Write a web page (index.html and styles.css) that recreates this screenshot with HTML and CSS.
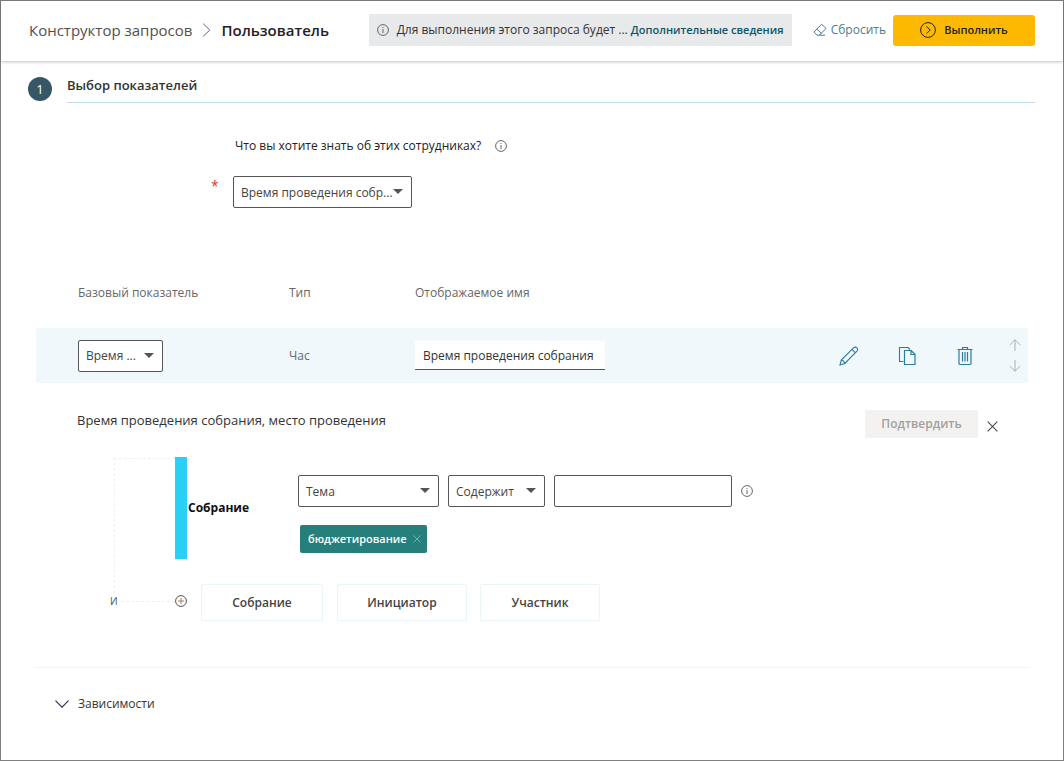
FILE: index.html
```html
<!DOCTYPE html>
<html lang="ru">
<head>
<meta charset="utf-8">
<title>Конструктор запросов</title>
<link rel="stylesheet" href="styles.css">
</head>
<body>
<div class="page">
  <svg class="defs" aria-hidden="true">
    <symbol id="info" viewBox="0 0 12 12"><circle cx="6" cy="6" r="5.4" fill="none" stroke="currentColor" stroke-width="1"/><path d="M6 5v4M6 3v1" stroke="currentColor" stroke-width="1"/></symbol>
    <symbol id="cross" viewBox="0 0 12 12"><path d="M.7.7l10.6 10.6M11.3.7L.7 11.3" stroke="currentColor" stroke-width="1.1" fill="none"/></symbol>
  </svg>

  <header class="header">
    <nav class="crumbs">
      <a class="crumb" href="#">Конструктор запросов</a>
      <svg class="crumb-arrow" viewBox="0 0 8 14"><path d="M.7.7L7.3 7 .7 13.3" fill="none" stroke="currentColor" stroke-width="1"/></svg>
      <h1 class="crumb-current">Пользователь</h1>
    </nav>
    <div class="notice">
      <svg class="icon-info"><use href="#info"/></svg>
      <p class="notice-text">Для выполнения этого запроса будет ... <a class="notice-link" href="#">Дополнительные сведения</a></p>
    </div>
    <button class="reset" type="button">
      <svg class="icon-eraser" viewBox="0 0 14 14"><path d="M8.6 1.2l4.4 4.2-6.6 6.8H4L.9 9.1zM3.9 6.1l4.5 4.3M6 12.2h6" fill="none" stroke="currentColor" stroke-width="1"/></svg>
      Сбросить
    </button>
    <button class="run" type="button">
      <svg class="icon-run" viewBox="0 0 16 16"><circle cx="8" cy="8" r="7.4" fill="none" stroke="currentColor"/><path d="M6.6 4.4L10.2 8l-3.6 3.6" fill="none" stroke="currentColor"/></svg>
      Выполнить
    </button>
  </header>

  <main class="main">
    <div class="step">
      <span class="step-number">1</span>
      <h2 class="step-title">Выбор показателей</h2>
    </div>

    <div class="question">
      <div class="question-head">
        <label for="metric">Что вы хотите знать об этих сотрудниках?</label>
        <svg class="icon-info"><use href="#info"/></svg>
      </div>
      <div class="question-field">
        <span class="required">*</span>
        <span class="select select-metric"><select id="metric"><option>Время проведения собр...</option></select></span>
      </div>
    </div>

    <table class="metrics">
      <colgroup><col class="col-base"><col class="col-type"><col class="col-name"><col></colgroup>
      <thead>
        <tr><th>Базовый показатель</th><th>Тип</th><th>Отображаемое имя</th><th></th></tr>
      </thead>
      <tbody>
        <tr>
          <td><span class="select select-base"><select aria-label="Базовый показатель"><option>Время ...</option></select></span></td>
          <td>Час</td>
          <td><input class="name-input" type="text" aria-label="Отображаемое имя" value="Время проведения собрания"></td>
          <td>
            <div class="actions">
              <button class="action" type="button" aria-label="Изменить"><svg viewBox="0 0 20 20"><path d="M1 19l1.3-5L14.500 1.900c1.200-1.200 2.600-.8 3.400 0s1 2.200 0 3.300L5.800 17.500zM2.300 14c1.700.3 3 1.700 3.500 3.500M13 3.400l3.400 3.400" fill="none" stroke="currentColor" stroke-width="1.100"/></svg></button>
              <button class="action" type="button" aria-label="Копировать"><svg viewBox="0 0 20 20"><path d="M6.500 15.500h-4v-14H11l2 2" fill="none" stroke="currentColor" stroke-width="1.100"/><path d="M7.500 4.500h6.700l3.800 3.800v10.200H7.500zM14 4.500v4h4" fill="none" stroke="currentColor" stroke-width="1.200"/></svg></button>
              <button class="action" type="button" aria-label="Удалить"><svg viewBox="0 0 20 20"><path d="M2.500 3.500h15M7.500 3.500v-2h5v2M4 3.500v13.700c0 .8.5 1.300 1.300 1.300h9.400c.8 0 1.300-.5 1.300-1.300V3.500M7.500 6v9.500M10 6v9.500M12.500 6v9.500" fill="none" stroke="currentColor" stroke-width="1.200"/></svg></button>
              <div class="order">
                <button class="order-button" type="button" aria-label="Выше"><svg viewBox="0 0 12 12"><path d="M6 12V.8M.7 6L6 .8 11.300 6" fill="none" stroke="currentColor"/></svg></button>
                <button class="order-button" type="button" aria-label="Ниже"><svg viewBox="0 0 12 12"><path d="M6 0v11.200M.7 6L6 11.200 11.300 6" fill="none" stroke="currentColor"/></svg></button>
              </div>
            </div>
          </td>
        </tr>
      </tbody>
    </table>

    <section class="editor">
      <div class="editor-head">
        <h3 class="editor-title">Время проведения собрания, место проведения</h3>
        <button class="confirm" type="button" disabled>Подтвердить</button>
        <button class="close" type="button" aria-label="Закрыть"><svg><use href="#cross"/></svg></button>
      </div>

      <div class="tree">
        <div class="rail"></div>
        <div class="rule">
          <strong class="rule-label">Собрание</strong>
          <div class="rule-body">
            <div class="rule-fields">
              <span class="select select-field"><select aria-label="Поле"><option>Тема</option></select></span>
              <span class="select select-operator"><select aria-label="Условие"><option>Содержит</option></select></span>
              <input class="value-input" type="text" aria-label="Значение">
              <svg class="icon-info"><use href="#info"/></svg>
            </div>
            <span class="tag">бюджетирование <button class="tag-remove" type="button" aria-label="Убрать"><svg><use href="#cross"/></svg></button></span>
          </div>
        </div>
        <div class="join"><span>И</span></div>
        <div class="add">
          <svg class="icon-plus" viewBox="0 0 12 12"><circle cx="6" cy="6" r="5.400" fill="none" stroke="currentColor"/><path class="plus-mark" d="M6 3v6M3 6h6"/></svg>
          <button class="add-button add-meeting" type="button">Собрание</button>
          <button class="add-button add-organizer" type="button">Инициатор</button>
          <button class="add-button" type="button">Участник</button>
        </div>
      </div>
    </section>

    <button class="dependencies" type="button">
      <svg viewBox="0 0 14 8"><path d="M.5.700L7 7.200 13.500.700" fill="none" stroke="currentColor" stroke-width="1.200"/></svg>
      Зависимости
    </button>
  </main>
</div>
</body>
</html>
```
FILE: styles.css
```css
* { box-sizing: border-box; }

body {
  margin: 0;
  font: 12px/16px "Open Sans", "Noto Sans", sans-serif;
  color: #333;
  background: #fff;
}

h1, h2, h3, p { margin: 0; }
a { text-decoration: none; }
button, input, select { font: inherit; color: inherit; }
button { padding: 0; border: 0; background: none; cursor: pointer; }
svg { display: block; flex: none; }

.defs { position: absolute; width: 0; height: 0; }

.page {
  min-height: 100vh;
  border: 1px solid #808080;
}

.header {
  display: flex;
  align-items: center;
  height: 60px;
  padding: 0 28px 2px;
  box-shadow: 0 1px 3px rgba(0, 0, 0, 0.25);
}

.crumbs { display: flex; align-items: center; gap: 10px; margin-right: auto; }
.crumb, .crumb-current { font-size: 15px; line-height: 20px; white-space: nowrap; }
.crumb { color: #505050; }
.crumb-current { color: #222; font-weight: 600; }
.crumb-arrow { width: 9px; height: 14px; color: #666; }

.notice {
  display: flex;
  align-items: center;
  gap: 8px;
  width: 423px;
  height: 32px;
  padding: 0 8px;
  background: #e8e9eb;
}
.notice-text { white-space: nowrap; }
.notice-link { color: #0b556a; font-size: 11px; font-weight: 600; }
.icon-info { width: 12px; height: 12px; color: #666; }

.reset {
  display: flex;
  align-items: center;
  gap: 4px;
  margin: 0 7px 0 21px;
  color: #4f7c90;
  font-weight: 500;
}
.icon-eraser { width: 14px; height: 14px; }

.run {
  display: flex;
  align-items: center;
  justify-content: center;
  gap: 8px;
  width: 142px;
  height: 31px;
  border-radius: 3px;
  background: #fdb900;
  color: #222;
  font-size: 11px;
  font-weight: 600;
}
.icon-run { width: 16px; height: 16px; }

.main { padding: 16px 35px 0; }

.step { display: flex; gap: 15px; margin: 0 -7px 0 -8px; }
.step-number {
  width: 24px;
  height: 24px;
  border-radius: 50%;
  background: #385766;
  color: #fff;
  font-size: 13px;
  line-height: 24px;
  text-align: center;
}
.step-title {
  flex: 1;
  height: 26px;
  border-bottom: 1px solid #bcdfe5;
  font-size: 13px;
  line-height: 16px;
  font-weight: 600;
}

.question { margin: 35px 0 0 175px; }
.question-head {
  display: flex;
  align-items: center;
  gap: 14px;
  padding-left: 24px;
  color: #222;
  font-weight: 500;
}
.question-field { display: flex; gap: 14px; margin-top: 22px; }
.required { width: 8px; color: #f03030; font-size: 14px; line-height: 20px; }

.select { display: inline-block; position: relative; vertical-align: top; }
.select::after {
  content: "";
  position: absolute;
  top: 13px;
  right: 9px;
  border: 5px solid transparent;
  border-top-color: #555;
  border-bottom: 0;
  pointer-events: none;
}
.select select {
  display: block;
  width: 100%;
  height: 32px;
  padding: 1px 7px 0;
  border: 1px solid #555;
  border-radius: 2px;
  background: #fff;
  color: #444;
  appearance: none;
}
.select-metric { width: 179px; }
.select-base { width: 85px; }
.select-field { width: 141px; }
.select-operator { width: 97px; }

.metrics {
  width: 100%;
  margin-top: 69px;
  border-collapse: collapse;
  table-layout: fixed;
}
.col-base { width: 253px; }
.col-type { width: 126px; }
.col-name { width: 240px; }
.metrics th, .metrics td { padding: 0; text-align: left; color: #666; font-weight: 400; }
.metrics th { height: 51px; padding-bottom: 19px; }
.metrics th:first-child, .metrics td:first-child { padding-left: 42px; }
.metrics td { height: 55px; background: #f0f8fc; }
.name-input {
  display: block;
  width: 190px;
  height: 29px;
  padding: 0 8px;
  border: 0;
  border-bottom: 1px solid #555;
  border-radius: 2px 2px 0 0;
  background: #fff;
  color: #333;
}

.actions { display: flex; align-items: center; justify-content: flex-end; }
.action { display: flex; justify-content: center; width: 58px; color: #2b7d9d; }
.action svg { width: 20px; height: 20px; }
.order { display: flex; flex-direction: column; gap: 9px; margin: 0 7px 0 15px; }
.order-button { color: #a8b0b4; }
.order-button svg { width: 12px; height: 12px; }

.editor {
  padding-bottom: 46px;
  border-bottom: 1px solid #eff5f5;
}
.editor-head { display: flex; padding: 27px 30px 0 41px; }
.editor-title { flex: 1; font-size: 13px; line-height: 20px; font-weight: 400; }
.confirm {
  width: 113px;
  height: 28px;
  border-radius: 2px;
  background: #f3f2f1;
  color: #a19f9d;
  font-weight: 600;
}
.close { width: 11px; margin-left: 9px; padding-top: 5px; color: #444; }
.close svg { width: 11px; height: 11px; }

.tree {
  display: grid;
  grid-template-columns: 65px 1fr;
  margin: 19px 0 0 74px;
}
.rail {
  grid-area: 1 / 1 / 3 / 2;
  margin: 1px 0 28px 4px;
  border: 1px dashed #e8f3f5;
  border-width: 1px 0 0 1px;
}
.rule {
  grid-area: 1 / 2;
  display: flex;
  align-items: center;
  height: 102px;
  margin-bottom: 25px;
  border-left: 12px solid #2acff5;
}
.rule-label { width: 111px; padding-left: 1px; color: #111; font-weight: 700; }
.rule-body { display: flex; flex-direction: column; align-items: flex-start; gap: 18px; padding-top: 12px; }
.rule-fields { display: flex; align-items: center; gap: 9px; }
.value-input { width: 178px; height: 32px; padding: 0 8px; border: 1px solid #555; border-radius: 2px; background: #fff; }
.tag {
  display: flex;
  align-items: center;
  gap: 6px;
  height: 28px;
  margin-left: 2px;
  padding: 0 6px 0 8px;
  border-radius: 2px;
  background: #277f7c;
  color: #fff;
  font-size: 11px;
  font-weight: 600;
}
.tag-remove { color: #8fc4c0; }
.tag-remove svg { width: 8px; height: 8px; }

.join {
  grid-area: 2 / 1;
  display: flex;
  align-items: center;
  gap: 3px;
  padding-bottom: 3px;
  color: #385766;
  font-size: 10px;
}
.join::after { content: ""; flex: 1; border-top: 1px dashed #e8f3f5; }
.add { grid-area: 2 / 2; display: flex; align-items: center; }
.icon-plus { width: 12px; height: 12px; margin-right: 14px; margin-bottom: 3px; color: #555; }
.plus-mark { stroke: #b07850; stroke-width: 1; }
.add-button {
  width: 120px;
  height: 37px;
  border: 1px solid #eaf5f6;
  border-radius: 2px;
  color: #444;
  font-weight: 600;
}
.add-meeting { width: 122px; margin-right: 14px; }
.add-organizer { width: 130px; margin-right: 13px; }

.dependencies {
  display: flex;
  align-items: center;
  gap: 9px;
  margin: 28px 0 0 19px;
  color: #333;
  font-weight: 500;
}
.dependencies svg { width: 14px; height: 8px; color: #335; }
```
